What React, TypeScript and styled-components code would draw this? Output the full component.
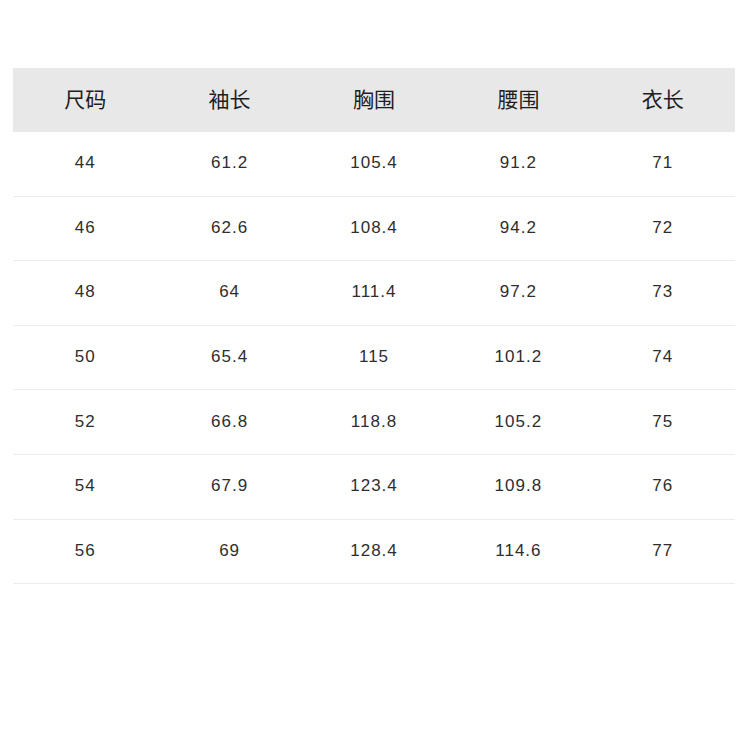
import styled, { createGlobalStyle } from 'styled-components';

const GlobalStyle = createGlobalStyle`
	body {
		margin: 0;
		background: #fff;
		font-family: "Liberation Sans", "Noto Sans CJK SC", sans-serif;
	}
`;

const Page = styled.div`
	width: 750px;
	height: 750px;
	padding: 68px 14px 0 13px;
	box-sizing: border-box;
`;

const Table = styled.div`
	width: 722px;
`;

const Row = styled.div<{ $head?: boolean }>`
	display: grid;
	grid-template-columns: repeat(5, 1fr);
	align-items: center;
	height: ${(p) => (p.$head ? '64px' : '64.6px')};
	background: ${(p) => (p.$head ? '#e8e8e8' : '#fff')};
	border-bottom: 1px solid ${(p) => (p.$head ? '#e8e8e8' : '#ececec')};
	box-sizing: border-box;
`;

const Cell = styled.div<{ $head?: boolean }>`
	text-align: center;
	color: ${(p) => (p.$head ? '#1e1e1e' : '#2e2e2e')};
	font-size: ${(p) => (p.$head ? '21px' : '17px')};
	letter-spacing: ${(p) => (p.$head ? '0' : '1px')};
	margin-top: ${(p) => (p.$head ? '-4px' : '-1px')};
`;

const headers = ['尺码', '袖长', '胸围', '腰围', '衣长'];

const rows = [
	['44', '61.2', '105.4', '91.2', '71'],
	['46', '62.6', '108.4', '94.2', '72'],
	['48', '64', '111.4', '97.2', '73'],
	['50', '65.4', '115', '101.2', '74'],
	['52', '66.8', '118.8', '105.2', '75'],
	['54', '67.9', '123.4', '109.8', '76'],
	['56', '69', '128.4', '114.6', '77'],
];

function App() {
	return (
		<Page>
			<GlobalStyle />
			<Table>
				<Row $head>
					{headers.map((h) => (
						<Cell $head key={h}>
							{h}
						</Cell>
					))}
				</Row>
				{rows.map((r) => (
					<Row key={r[0]}>
						{r.map((v, i) => (
							<Cell key={i}>{v}</Cell>
						))}
					</Row>
				))}
			</Table>
		</Page>
	);
}

export default App;
